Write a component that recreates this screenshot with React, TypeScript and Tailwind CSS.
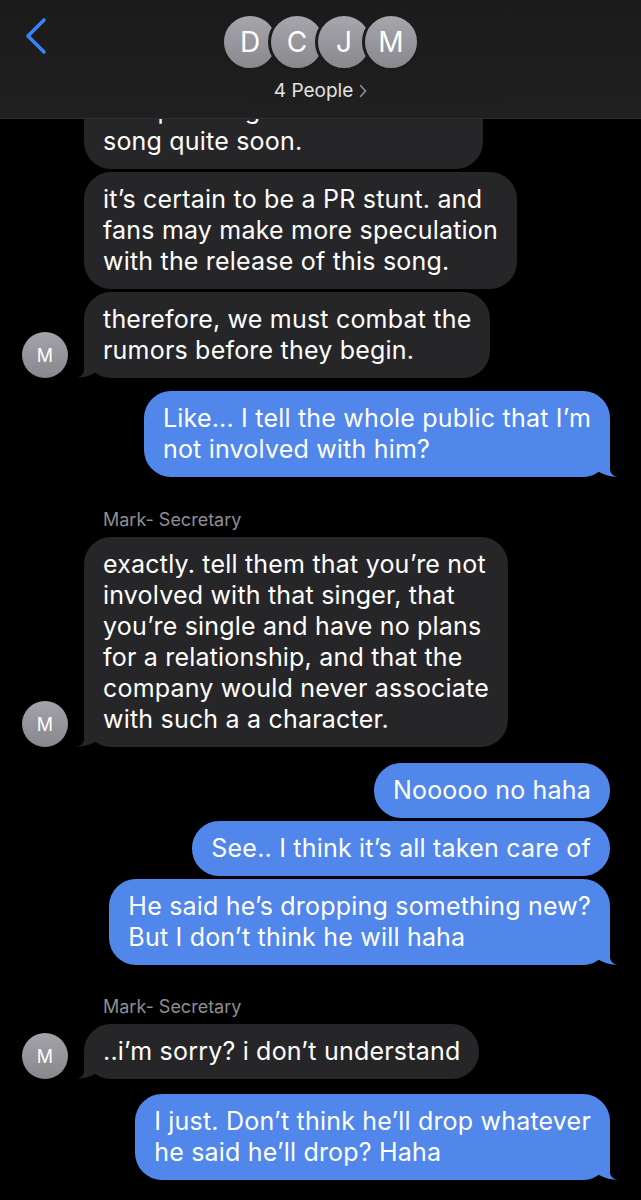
import React from 'react';

const FONT = "font-['Inter','Liberation_Sans',sans-serif]";

type Msg =
  | { kind: 'in'; lines: string[]; tail?: boolean; gap: string }
  | { kind: 'out'; lines: string[]; tail?: boolean; gap: string }
  | { kind: 'label'; text: string; gap: string };

const messages: Msg[] = [
  // first bubble is half scrolled under the header
  { kind: 'in', lines: ['he’s planning to release a new', 'song quite soon.'], gap: '-mt-[36px]' },
  { kind: 'in', lines: ['it’s certain to be a PR stunt. and', 'fans may make more speculation', 'with the release of this song.'], gap: 'mt-[3px]' },
  { kind: 'in', lines: ['therefore, we must combat the', 'rumors before they begin.'], tail: true, gap: 'mt-[3px]' },
  { kind: 'out', lines: ['Like... I tell the whole public that I’m', 'not involved with him?'], tail: true, gap: 'mt-[13px]' },
  { kind: 'label', text: 'Mark- Secretary', gap: 'mt-[33px]' },
  {
    kind: 'in',
    lines: [
      'exactly. tell them that you’re not',
      'involved with that singer, that',
      'you’re single and have no plans',
      'for a relationship, and that the',
      'company would never associate',
      'with such a a character.',
    ],
    tail: true,
    gap: 'mt-[7px]',
  },
  { kind: 'out', lines: ['Nooooo no haha'], gap: 'mt-[16px]' },
  { kind: 'out', lines: ['See.. I think it’s all taken care of'], gap: 'mt-[3px]' },
  { kind: 'out', lines: ['He said he’s dropping something new?', 'But I don’t think he will haha'], tail: true, gap: 'mt-[3px]' },
  { kind: 'label', text: 'Mark- Secretary', gap: 'mt-[32px]' },
  { kind: 'in', lines: ['..i’m sorry? i don’t understand'], tail: true, gap: 'mt-[7px]' },
  { kind: 'out', lines: ['I just. Don’t think he’ll drop whatever', 'he said he’ll drop? Haha'], tail: true, gap: 'mt-[15px]' },
];

const Tail = ({ color, side }: { color: string; side: 'left' | 'right' }) => (
  <svg
    width="20"
    height="27"
    viewBox="-11 -27 20 27"
    className={`absolute bottom-0 ${side === 'right' ? 'right-[-9px]' : 'left-[-9px] -scale-x-100'}`}
  >
    <path d="M0 -27 L0 -8 C0 -3 4 -0.5 9 0 C3 -0.5 -6 -1.5 -11 -5.3 L-11 -27 Z" fill={color} />
  </svg>
);

const Bubble = ({ lines, out, tail }: { lines: string[]; out: boolean; tail?: boolean }) => (
  <div
    className={`relative rounded-[27px] px-[19px] py-[12px] text-[25px] leading-[31px] tracking-[0.2px] text-white whitespace-nowrap ${
      out ? 'bg-[#5187ea]' : 'bg-[#262629]'
    }`}
  >
    {lines.map((l, i) => (
      <div key={i}>{l}</div>
    ))}
    {tail && <Tail color={out ? '#5187ea' : '#262629'} side={out ? 'right' : 'left'} />}
  </div>
);

const SmallAvatar = () => (
  <div className="w-[46px] h-[46px] shrink-0 rounded-full bg-gradient-to-b from-[#a3a3a9] to-[#87878d] flex items-center justify-center text-white text-[18px]">
    M
  </div>
);

const Header = () => (
  <div className="relative h-[119px] shrink-0 bg-gradient-to-b from-[#1b1b1c] to-[#202021] border-b border-[#2e2e30]">
    <svg width="24" height="38" viewBox="0 0 24 38" className="absolute left-[24px] top-[17px]">
      <path d="M20 3 L4 19 L20 35" fill="none" stroke="#3a82f7" strokeWidth="3.6" strokeLinecap="round" strokeLinejoin="round" />
    </svg>
    <div className="flex flex-col items-center pt-[13px]">
      <div className="flex">
        {['D', 'C', 'J', 'M'].map((c, i) => (
          <div
            key={c}
            className={`w-[58px] h-[58px] rounded-full border-[3px] border-[#1c1c1d] bg-gradient-to-b from-[#a6a6ac] to-[#88888e] flex items-center justify-center text-white text-[28px] ${
              i > 0 ? '-ml-[11px]' : ''
            }`}
          >
            {c}
          </div>
        ))}
      </div>
      <div className="mt-[9px] flex items-center gap-[6px] text-[19px] leading-[22px] text-[#e2e2e4]">
        <span>4 People</span>
        <svg width="8" height="14" viewBox="0 0 8 14">
          <path d="M1.5 1.5 L6.5 7 L1.5 12.5" fill="none" stroke="#8e8e93" strokeWidth="1.6" strokeLinecap="round" strokeLinejoin="round" />
        </svg>
      </div>
    </div>
  </div>
);

export default function App() {
  return (
    <div className={`flex flex-col w-[641px] h-[1200px] bg-black overflow-hidden ${FONT}`}>
      <Header />
      <div className="flex flex-col flex-1 overflow-hidden">
        {messages.map((m, i) => {
          if (m.kind === 'label') {
            return (
              <div key={i} className={`${m.gap} pl-[103px] text-[18px] leading-[20px] text-[#8e8e93]`}>
                {m.text}
              </div>
            );
          }
          if (m.kind === 'out') {
            return (
              <div key={i} className={`${m.gap} flex shrink-0 justify-end pr-[31px]`}>
                <Bubble lines={m.lines} out tail={m.tail} />
              </div>
            );
          }
          return (
            <div key={i} className={`${m.gap} flex shrink-0 items-end pl-[22px] gap-[16px]`}>
              {m.tail ? <SmallAvatar /> : <div className="w-[46px] shrink-0" />}
              <Bubble lines={m.lines} out={false} tail={m.tail} />
            </div>
          );
        })}
      </div>
    </div>
  );
}
